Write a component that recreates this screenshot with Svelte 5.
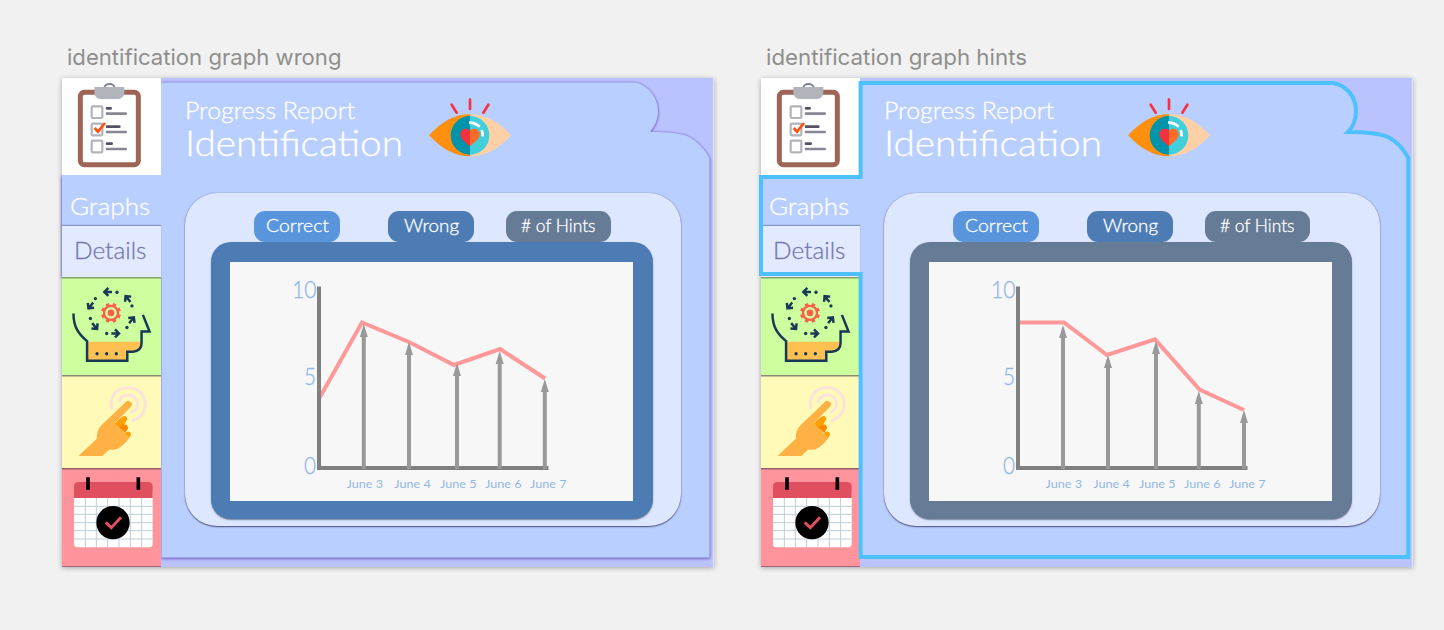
<script>
  const boards = [
    {
      name: 'identification graph wrong', nameWidth: 274.5, frame: '#4d7cb5', selected: false,
      line: '90,135 132,60.5 179,80 224,103 270,87 315,116.5',
      arrows: [[133.8, 62], [179, 80], [227, 101], [269.7, 89], [314.8, 117]]
    },
    {
      name: 'identification graph hints', nameWidth: 261, frame: '#667b96', selected: true,
      line: '90,60.5 135,60.5 178,93 226,77.3 270.5,127.5 315,148',
      arrows: [[134, 63], [179, 93], [227, 79], [269.8, 129], [315, 148]]
    }
  ];
  const dates = [[116.5, 'June 3'], [164.3, 'June 4'], [210, 'June 5'], [255, 'June 6'], [300, 'June 7']];
  const levels = [[62, 24.5, 35.7, '10'], [74, 12, 122.7, '5'], [74, 12, 211.5, '0']];
  const teeth = [0, 45, 90, 135, 180, 225, 270, 315];
  const shape = 'M99 4.5H573C586 7 596 19 596 33C596 41 593 48 588 53.7C608 54 621 55 629 60C637 65 643 72 647.5 80V479.5H99.5V199H0V97.5H99Z';
  const outline = 'M99.6 5H572.5C586 8 595 19 595 33C595 42 591 50 587 54C605 54 618 55 627 59C637 64 643 72 647.3 80V479H99.6V196H0V99H99.6Z';
</script>

{#snippet label(text, width, height, size, base)}
  <svg class="label" {width} {height} viewBox="0 0 {width} {height}">
    <text x="0" y={base} font-size={size} textLength={width} lengthAdjust="spacingAndGlyphs">{text}</text>
  </svg>
{/snippet}

{#snippet clipboard()}
  <svg viewBox="36 129 297 288" width="99" height="96">
    <rect x="91" y="172" width="174" height="217" rx="12" fill="#fff" stroke="#9e6557" stroke-width="15" />
    <path d="M163 160C163 143 194 143 194 160" fill="none" stroke="#81828f" stroke-width="6" />
    <path d="M133 156H223V170Q223 192 201 192H155Q133 192 133 170Z" fill="#b2b4bc" />
    <g fill="#fff" stroke="#b2b4bc" stroke-width="6.5">
      <rect x="125" y="214" width="32" height="35" rx="3" />
      <rect x="125" y="266" width="32" height="35" rx="3" />
      <rect x="125" y="317" width="32" height="35" rx="3" />
    </g>
    <g stroke-width="8" stroke-linecap="round">
      <path d="M171 220H182M171 275H208M171 326H185" stroke="#565064" />
      <path d="M171 236H227M171 291H227M171 342H227" stroke="#868694" />
    </g>
    <path d="M134 279L144 290L165 264" fill="none" stroke="#ff4f0a" stroke-width="8" />
  </svg>
{/snippet}

{#snippet arrow(x, y, turn)}
  <path d="M12 0H-9M1 -12L-11 0L1 12" transform="translate({x} {y}) rotate({turn})" />
{/snippet}

{#snippet head()}
  <svg viewBox="21 22 297 292" width="99" height="97">
    <path d="M98 217H258Q259 247 233 247H215V274H96Z" fill="#ffc052" />
    <g fill="none" stroke="#163a55" stroke-width="7.5">
      <path d="M55 132C55 172 70 194 96 215V274H217V247H234Q260 245 260 221V186H284L264 136" />
      {@render arrow(159, 67, 0)}
      {@render arrow(107, 108, -52)}
      {@render arrow(119, 170, 230)}
      {@render arrow(181, 192, 180)}
      {@render arrow(230, 152, 128)}
      {@render arrow(219, 88, 50)}
    </g>
    <g fill="#163a55">
      <circle cx="186" cy="68" r="5" /><circle cx="121" cy="87" r="5" /><circle cx="106" cy="147" r="5" />
      <circle cx="155" cy="192" r="5" /><circle cx="216" cy="174" r="5" /><circle cx="231" cy="109" r="5" />
      <circle cx="126" cy="253" r="5" /><circle cx="155" cy="253" r="5" /><circle cx="184" cy="253" r="5" />
    </g>
    <g transform="translate(168 130)" fill="none" stroke="#fb604e">
      <circle r="21" stroke-width="7" />
      {#each teeth as t}
        <path d="M0 -22V-30" stroke-width="11" transform="rotate({t + 22.5})" />
      {/each}
      <circle r="10" fill="#fb604e" stroke="none" />
    </g>
  </svg>
{/snippet}

{#snippet hand()}
  <svg viewBox="21 15 297 277" width="99" height="92">
    <g fill="none" stroke="#fbe3dc" stroke-width="9">
      <path d="M172 118C160 82 184 53 220 53C251 53 271 76 271 104C271 130 253 148 231 153" />
      <path d="M194 98C193 83 206 75 220 75C237 75 248 87 248 102C248 116 240 124 228 128" />
    </g>
    <path d="M195 146Q213 130 217 148L208 164L196 176L179 162Z" fill="#ff9e00" />
    <path d="M198 168Q216 157 220 174L211 190L190 172Z" fill="#ff8a00" />
    <path d="M208 192Q224 177 229 194L220 207Z" fill="#ffa000" />
    <path d="M70 259L126 206C124 185 132 170 149 157L211 98C220 87 238 99 229 110L179 160L224 204C209 223 192 241 173 240H162L142 259Z" fill="#ffb243" />
  </svg>
{/snippet}

{#snippet calendar()}
  <svg viewBox="21 294 297 294" width="99" height="98">
    <rect x="57" y="360" width="236" height="172" rx="10" fill="#fff" />
    <path d="M91 384V532M124 384V532M158 384V532M192 384V532M226 384V532M260 384V532M57 409H293M57 433H293M57 458H293M57 482H293M57 507H293" stroke="#bccdd9" stroke-width="3" />
    <path d="M57 384V350Q57 336 71 336H279Q293 336 293 350V384Z" fill="#df4f5f" />
    <path d="M99 322V359M250 322V359" stroke="#000" stroke-width="11" />
    <circle cx="174" cy="458" r="50" fill="#000" />
    <path d="M152 457L169 473L198 442" fill="none" stroke="#df4f5f" stroke-width="9" />
  </svg>
{/snippet}

{#snippet eye()}
  <svg class="eye" viewBox="87 68 246 176" width="82" height="58.7">
    <path d="M210 117C164 117 125 139 87 180C125 221 164 243 210 243Z" fill="#ff8f0e" />
    <path d="M210 117C256 117 295 139 333 180C295 221 256 243 210 243Z" fill="#ffd0a6" />
    <path d="M210 122A58 58 0 0 0 210 238Z" fill="#0094ab" />
    <path d="M210 122A58 58 0 0 1 210 238Z" fill="#42cfdc" />
    <path d="M210 166C201 155 181 160 181 177C181 194 200 203 210 213Z" fill="#f4313c" />
    <path d="M210 166C219 155 239 160 239 177C239 194 220 203 210 213Z" fill="#ff6b25" />
    <path d="M207 142Q226 142 239 154M245 164Q249 173 248 183" fill="none" stroke="#fff" stroke-width="8" />
    <path d="M155 88L170 112M210 73V101M265 88L250 112" stroke="#f7313f" stroke-width="8" stroke-linecap="round" />
  </svg>
{/snippet}

<main>
  {#each boards as b}
    <section>
      <h2>{@render label(b.name, b.nameWidth, 30, 22, 22)}</h2>
      <div class="board">
        <svg class="backdrop" width="652" height="489" viewBox="0 0 652 489">
          {#if b.selected}
            <path d={outline} fill="#b9cfff" />
          {:else}
            <path class="raised" d={shape} fill="#b9cfff" />
          {/if}
        </svg>
        <nav>
          <div class="tile white">{@render clipboard()}</div>
          <div class="tab graphs">{@render label('Graphs', 80, 34, 23, 25)}</div>
          <div class="tab details">{@render label('Details', 72.5, 34, 23, 25)}</div>
          <div class="tile green">{@render head()}</div>
          <div class="tile yellow">{@render hand()}</div>
          <div class="tile red">{@render calendar()}</div>
        </nav>
        <article>
          <header>
            <div class="titles">
              {@render label('Progress Report', 170, 30, 22.5, 21.3)}
              {@render label('Identification', 218, 40, 34.5, 27.5)}
            </div>
            {@render eye()}
          </header>
          <div class="panel">
            <div class="buttons">
              <button class="correct">{@render label('Correct', 63, 30, 18, 21.4)}</button>
              <button class="wrong">{@render label('Wrong', 55, 30, 18, 21.4)}</button>
              <button class="hints">{@render label('# of Hints', 74.5, 30, 18, 21.4)}</button>
            </div>
            <div class="frame" style:background={b.frame}>
              <svg class="chart" width="403" height="239" viewBox="0 0 403 239">
                <polyline points={b.line} fill="none" stroke="#ff9999" stroke-width="4" />
                <path d="M89 24.5V206H318.5" fill="none" stroke="#808080" stroke-width="4" />
                {#each b.arrows as [x, y]}
                  <path d="M{x} {y + 9}V207" stroke="#999" stroke-width="4" />
                  <path d="M{x} {y}L{x + 4} {y + 13}H{x - 4}Z" fill="#999" />
                {/each}
                {#each levels as [x, w, y, t]}
                  <text class="level" {x} {y} font-size="23" textLength={w} lengthAdjust="spacingAndGlyphs">{t}</text>
                {/each}
                {#each dates as [x, t]}
                  <text class="date" {x} y="225.5" font-size="11.5" textLength="36.5" lengthAdjust="spacingAndGlyphs">{t}</text>
                {/each}
              </svg>
            </div>
          </div>
        </article>
        {#if b.selected}
          <svg class="backdrop ring" width="652" height="489" viewBox="0 0 652 489">
            <path d={outline} fill="none" stroke="#4dc1ff" stroke-width="4" />
          </svg>
        {/if}
      </div>
    </section>
  {/each}
</main>

<style>
  :global(body) { background: #f1f1f1; }
  main {
    display: flex;
    gap: 47px;
    box-sizing: border-box;
    width: 1444px;
    height: 630px;
    padding: 43px 0 0 62px;
    overflow: hidden;
    font-family: Lato, "Liberation Sans", sans-serif;
    font-weight: 300;
  }
  svg { display: block; flex: none; overflow: visible; }
  .label { fill: currentColor; }
  .board .label, .level { stroke: currentColor; stroke-width: 0.3px; }
  h2 {
    height: 35px;
    margin: 0 0 0 5px;
    color: #8e8f8d;
    font-family: Inter, sans-serif;
    font-weight: 400;
  }
  .board {
    position: relative;
    display: flex;
    width: 652px;
    height: 489px;
    background: #bbc3ff;
    box-shadow: inset -1px 0 #e4e7fc, 0 1px 5px rgba(0, 0, 0, 0.32);
  }
  .backdrop { position: absolute; left: 0; top: 0; }
  .ring { pointer-events: none; }
  .raised { filter: drop-shadow(0 0 0.8px #8c7fd0) drop-shadow(0.5px 1px 1.2px #7364c5); }
  nav { position: relative; width: 99px; }
  .tile, .tab { box-sizing: border-box; overflow: hidden; }
  .white { height: 97px; background: #fff; }
  .graphs { height: 51px; padding: 15px 0 0 7.5px; background: #b9cfff; color: #fff; }
  .graphs, .details { overflow: visible; }
  .details {
    height: 51px;
    padding: 8px 0 0 12px;
    background: #e2eaff;
    color: #7478ad;
    box-shadow: 0 -1px 1px #8796bd;
  }
  .green { height: 98px; background: #ceff9e; box-shadow: inset 0 1.5px #84a36c; }
  .yellow { height: 93px; background: #fffab8; box-shadow: inset 0 1.5px #8d8b74; }
  .red { height: 99px; background: #ff949c; box-shadow: inset 0 1.5px #93606c, inset 0 -1px #a4667a; }
  article { position: relative; width: 553px; }
  header { display: flex; height: 115px; padding-left: 24px; color: #fff; }
  .titles { width: 244px; padding-top: 20px; }
  .eye { margin-top: 19.7px; }
  .panel {
    box-sizing: border-box;
    width: 496px;
    height: 333px;
    margin-left: 24px;
    padding: 18px 26px 0;
    border-radius: 32px;
    background: #dde7ff;
    box-shadow: 0 0 1px #6d6aa5, 0 1px 1.5px #4c477c;
  }
  .buttons { display: flex; height: 31px; padding-left: 43px; }
  button {
    display: flex;
    justify-content: center;
    box-sizing: border-box;
    height: 31px;
    padding: 0;
    border: 0;
    border-radius: 11px;
    color: #fff;
    font: inherit;
  }
  .correct { width: 86px; background: #5895dd; }
  .wrong { width: 86px; margin-left: 48px; background: #4d7cb5; }
  .hints { width: 105px; margin-left: 32px; background: #667b96; }
  .frame {
    box-sizing: border-box;
    width: 442px;
    height: 276.5px;
    padding: 20px 19px 17.5px;
    border-radius: 20px;
    box-shadow: 0 1px 1.5px rgba(50, 65, 90, 0.6);
  }
  .chart { background: #f7f7f7; color: #91b7e9; fill: #91b7e9; }
  .date { font-weight: 400; }
</style>
